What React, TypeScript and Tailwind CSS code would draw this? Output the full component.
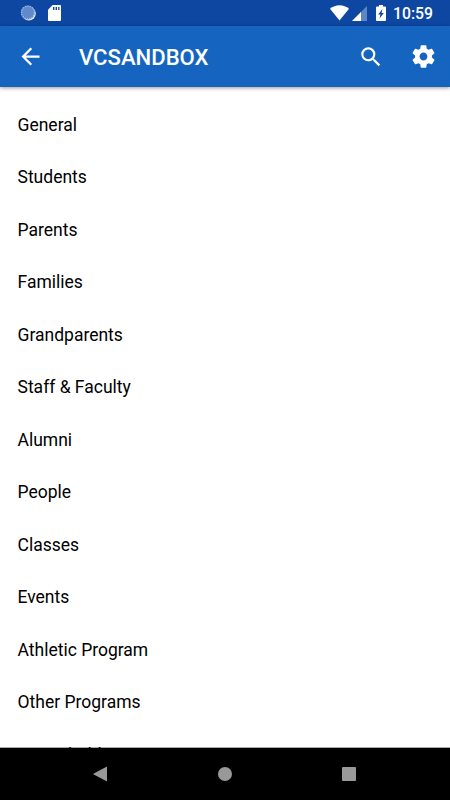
const ITEMS = [
  "General",
  "Students",
  "Parents",
  "Families",
  "Grandparents",
  "Staff & Faculty",
  "Alumni",
  "People",
  "Classes",
  "Events",
  "Athletic Program",
  "Other Programs",
  "Households",
];

function StatusBar() {
  return (
    <div className="flex h-[26px] shrink-0 items-center bg-[#0d47a1] text-white">
      <svg className="ml-5 h-4 w-4" viewBox="0 0 16 16">
        <circle cx="8.8" cy="8.6" r="7" fill="#e3f2fd" />
        <circle cx="7.9" cy="7.5" r="7" fill="#6289c9" />
        <circle cx="7.9" cy="7.5" r="6.4" fill="none" stroke="#a9c0e4" strokeWidth="1.2" strokeDasharray="1.2 1.2" />
      </svg>
      <svg className="ml-3 h-4 w-[13px]" viewBox="0 0 13 16">
        <path d="M4.6 0H12a1 1 0 0 1 1 1v14a1 1 0 0 1-1 1H1a1 1 0 0 1-1-1V4.7z" fill="currentColor" />
        <path d="M5 2h1.4v3H5zM7.6 2H9v3H7.6zM10.2 2h1.3v3h-1.3z" fill="#0d47a1" />
      </svg>
      <div className="ml-auto flex items-center pr-[17px]">
        <svg className="h-4 w-[19px]" viewBox="0 0 19 16">
          <path d="M9.5 15.6 0 3.7C5-1 14-1 19 3.7z" fill="currentColor" />
        </svg>
        <svg className="ml-[3px] h-4 w-[15px]" viewBox="0 0 15 16">
          <path d="M0 16 15 1v15z" fill="#5e86c5" />
          <path d="M0 16 9 7v9z" fill="currentColor" />
        </svg>
        <svg className="ml-[9px] h-4 w-2.5" viewBox="0 0 10 16">
          <path d="M3 0h4v1.6h2a1 1 0 0 1 1 1V15a1 1 0 0 1-1 1H1a1 1 0 0 1-1-1V2.6a1 1 0 0 1 1-1h2z" fill="currentColor" />
          <path d="M6.4 4 2.2 9.4h2.2L3.6 13.6 7.8 8H5.6z" fill="#0d47a1" />
        </svg>
        <span className="ml-[7px] pt-0.5 text-[15.75px] leading-none font-medium">10:59</span>
      </div>
    </div>
  );
}

function AppBar() {
  return (
    <header className="z-10 flex h-[61px] shrink-0 items-center bg-[#1565c0] text-white shadow-[0_1px_4px_rgba(0,0,0,0.4)]">
      <svg className="ml-[17px] h-[27px] w-[27px]" viewBox="0 0 24 24" fill="currentColor">
        <path d="M20 11H7.83l5.59-5.59L12 4l-8 8 8 8 1.41-1.41L7.83 13H20v-2z" />
      </svg>
      <h1 className="ml-[35px] pt-0.5 text-[22.1px] font-medium">VCSANDBOX</h1>
      <svg className="ml-auto h-[26px] w-[26px]" viewBox="0 0 24 24" fill="currentColor">
        <path d="M15.5 14h-.79l-.28-.27A6.471 6.471 0 0 0 16 9.5 6.5 6.5 0 1 0 9.5 16c1.61 0 3.09-.59 4.23-1.57l.27.28v.79l5 4.99L20.49 19l-4.99-5zm-6 0C7.01 14 5 11.99 5 9.5S7.01 5 9.5 5 14 7.01 14 9.5 11.99 14 9.5 14z" />
      </svg>
      <svg className="mr-[13px] ml-[26px] h-[27px] w-[27px]" viewBox="0 0 24 24" fill="currentColor">
        <path d="M19.43 12.98c.04-.32.07-.64.07-.98s-.03-.66-.07-.98l2.11-1.65c.19-.15.24-.42.12-.64l-2-3.46c-.12-.22-.39-.3-.61-.22l-2.49 1c-.52-.4-1.08-.73-1.69-.98l-.38-2.65C14.46 2.18 14.25 2 14 2h-4c-.25 0-.46.18-.49.42l-.38 2.65c-.61.25-1.17.59-1.69.98l-2.49-1c-.23-.09-.49 0-.61.22l-2 3.46c-.13.22-.07.49.12.64l2.11 1.65c-.04.32-.07.65-.07.98s.03.66.07.98l-2.11 1.65c-.19.15-.24.42-.12.64l2 3.46c.12.22.39.3.61.22l2.49-1c.52.4 1.08.73 1.69.98l.38 2.65c.03.24.24.42.49.42h4c.25 0 .46-.18.49-.42l.38-2.65c.61-.25 1.17-.59 1.69-.98l2.49 1c.23.09.49 0 .61-.22l2-3.46c.12-.22.07-.49-.12-.64l-2.11-1.65zM12 15.5c-1.93 0-3.5-1.57-3.5-3.5s1.57-3.5 3.5-3.5 3.5 1.57 3.5 3.5-1.57 3.5-3.5 3.5z" />
      </svg>
    </header>
  );
}

function NavigationBar() {
  return (
    <nav className="z-10 -mt-px flex h-[53px] shrink-0 items-center border-t border-black/35 bg-black bg-clip-padding text-[#999]">
      <svg className="ml-[93px] h-4 w-[14px]" viewBox="0 0 14 16" fill="currentColor">
        <path d="M14 .5v15L.8 8.6a.7.7 0 0 1 0-1.2z" />
      </svg>
      <span className="ml-[111px] h-[14px] w-[14px] rounded-full bg-[#999]" />
      <span className="ml-[110px] h-[14px] w-[14px] rounded-[1px] bg-[#999]" />
    </nav>
  );
}

export default function App() {
  return (
    <div className="flex h-[800px] w-[450px] flex-col overflow-hidden bg-white font-['Roboto',sans-serif]">
      <StatusBar />
      <AppBar />
      <ul className="min-h-0 flex-1 overflow-hidden pt-[11.5px] text-[17.5px] text-black">
        {ITEMS.map((item) => (
          <li key={item} className="flex h-[52.5px] items-center pl-[17.5px]">
            {item}
          </li>
        ))}
      </ul>
      <NavigationBar />
    </div>
  );
}
